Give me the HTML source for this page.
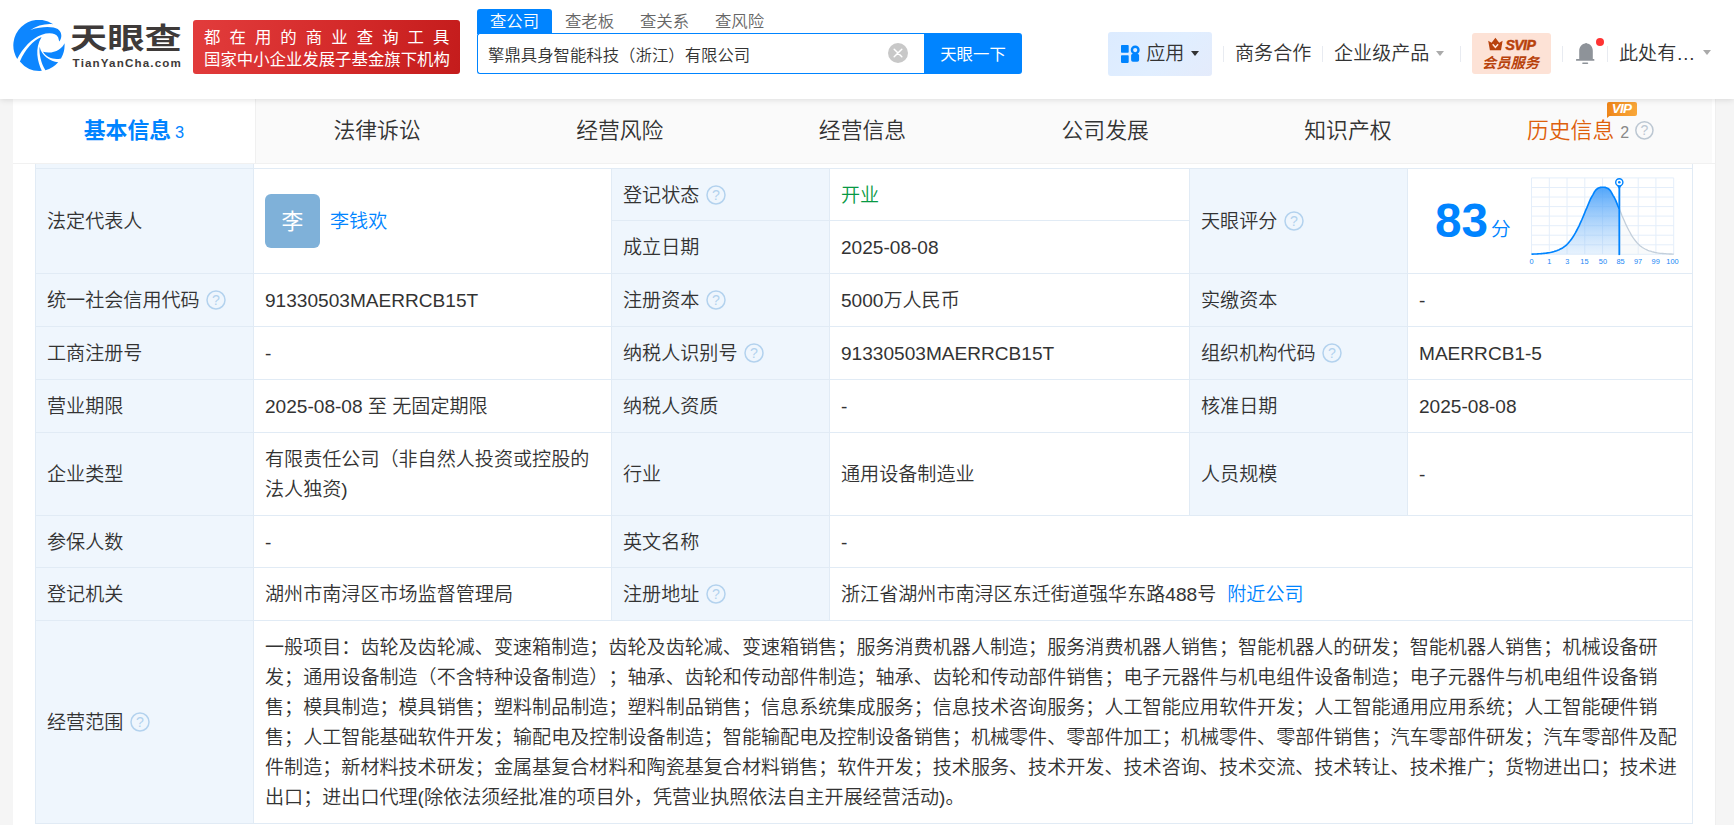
<!DOCTYPE html>
<html lang="zh-CN">
<head>
<meta charset="utf-8">
<title>天眼查</title>
<style>
*{box-sizing:border-box;margin:0;padding:0}
html,body{width:1734px;height:825px;overflow:hidden;background:#f5f5f5}
body{font-family:"Liberation Sans","Noto Sans CJK SC",sans-serif;color:#333;font-size:19.09px;position:relative;text-spacing-trim:space-all;-webkit-font-smoothing:antialiased}
a{color:#0084ff;text-decoration:none}
.abs{position:absolute}
/* header */
#hd{position:absolute;left:0;top:0;width:1734px;height:99px;background:#fff;z-index:5;box-shadow:0 1px 6px rgba(0,0,0,.12)}
#logo-ic{position:absolute;left:13px;top:20px;width:52px;height:52px}
#logo-cn{position:absolute;left:70px;top:13px;font-size:31.6px;font-weight:700;color:#3e3a39;line-height:50px;white-space:nowrap;transform:scale(1.178,0.92);transform-origin:0 39.500px}
#logo-en{position:absolute;left:72.6px;top:56px;font-size:11.6px;font-weight:700;color:#3e3a39;line-height:14px;white-space:nowrap;letter-spacing:1.16px}
#banner{position:absolute;left:193px;top:20px;width:267px;height:54px;border-radius:3px;background:linear-gradient(100deg,#e23c3c 0%,#d42a2a 55%,#c41c1c 100%);color:#fff;white-space:nowrap}
#banner .l1{position:absolute;left:11px;top:6px;font-size:16.4px;line-height:22px;letter-spacing:9.06px}
#banner .l2{position:absolute;left:11px;top:28px;font-size:16.4px;line-height:22px;letter-spacing:0px}
/* search */
#stabs{font-weight:350;position:absolute;left:477px;top:9px;height:25px;white-space:nowrap;font-size:16.4px;line-height:25px;color:#666}
#stabs span{position:absolute;top:0;height:25px;width:75px;text-align:center}
#stabs .on{background:#0084ff;color:#fff;border-radius:3px 3px 0 0}
#sbox{position:absolute;left:477px;top:33px;width:448px;height:41px;border:1.4px solid #0084ff;border-right:0;border-radius:3px 0 0 3px;background:#fff}
#sbox .t{font-weight:350;position:absolute;left:10px;top:0;line-height:42px;font-size:16.4px;color:#333;white-space:nowrap}
#sbox .x{position:absolute;left:410px;top:9px;width:20px;height:20px;border-radius:50%;background:#c8c8c8}
#sbtn{position:absolute;left:924px;top:33px;width:98px;height:41px;background:#0084ff;border-radius:0 3px 3px 0;color:#fff;font-size:16.4px;line-height:43px;text-align:center}
/* right nav */
#app{position:absolute;left:1108px;top:32px;width:104px;height:44px;border-radius:3px;background:linear-gradient(135deg,#dcebff 0%,#e0eeff 55%,#e4ebfb 100%)}
.nv{font-weight:350;position:absolute;top:39px;font-size:19.09px;line-height:30px;color:#333;white-space:nowrap}
.sep{position:absolute;top:46px;width:1px;height:15.500px;background:#e8ebf1}
.caret{position:absolute;width:0;height:0;border-left:4.5px solid transparent;border-right:4.5px solid transparent;border-top:5px solid #333}
#svip{position:absolute;left:1472px;top:33px;width:79px;height:41px;border-radius:3px;background:#fde2d6;color:#b8420c;text-align:center;white-space:nowrap}
/* tabs */
#wrap{position:absolute;left:13px;top:99px;width:1703px;height:726px;background:#fff;border-right:1px solid #efefef}
#tabs{position:absolute;left:13px;top:99px;width:1699px;height:64px;background:#fafafa;z-index:3}
#tabline{position:absolute;left:13px;top:163px;width:1702px;height:1px;background:#f1f1f1;z-index:3}
#tabs .tb{position:absolute;top:0;height:64px;width:242.710px;text-align:center;font-size:21.82px;line-height:64px;color:#333;white-space:nowrap;font-weight:350}
#tabs .tb.on{background:#fff;color:#0084ff;font-weight:700;width:242px;border-right:0}
#tabs .cnt{font-size:16.4px;font-weight:400;margin-left:4px}
/* table */
#tbl{position:absolute;left:0;top:0;width:1734px;height:825px}
.c{font-weight:350;padding-top:2px!important;position:absolute;border-right:1px solid #e1ebf5;border-bottom:1px solid #e1ebf5;background:#fff;display:flex;align-items:center;padding:0 11px;line-height:30px;white-space:nowrap}
.c.l{background:#eff6fd}
.q{display:inline-block;width:20px;height:20px;margin-left:6.5px;margin-top:-2px;flex:none}
.av{margin-top:-2px;display:block;width:55px;height:54px;border-radius:6px;background:#7fb1d9;color:#fff;font-size:21.8px;font-weight:400;line-height:55px;text-align:center;flex:none}
.nm{margin-left:10px}
.sc{position:absolute;left:27px;top:23.5px;font-size:47.7px;line-height:56px;font-weight:700;color:#0084ff}
.fen{position:absolute;left:83px;top:45px;font-size:19.6px;line-height:30px;color:#0084ff}
</style>
</head>
<body>
<div id="wrap"></div>
<div id="hd">
<svg id="logo-ic" viewBox="0 0 52 52"><g transform="translate(-5,-5) scale(0.07513)" fill="#0d86ff">
<path d="M602.7 122.3A341 341 0 0 0 122.8 585.700C196 440 318 306 450 262C540 232 640 238 668 298L682 352C722 300 722 230 662 186C605 152 455 146 298 199C385 138 500 110 602.7 122.3Z"/>
<path d="M447 294C332 338 230 458 158 618A341 341 0 0 0 450 743.600C394 620 350 452 447 294Z"/>
<path d="M421 422C410 520 440 640 498 736A341 341 0 0 0 668.2 630.100C560 612 444 542 421 422Z"/>
<path d="M751.7 374.900C722 450 600 530 465 490C520 572 620 602 705.6 578.400A341 341 0 0 0 751.7 374.900Z"/>
</g></svg>
<div id="logo-cn">天眼查</div>
<div id="logo-en">TianYanCha.com</div>
<div id="banner"><div class="l1">都在用的商业查询工具</div><div class="l2">国家中小企业发展子基金旗下机构</div></div>
<div id="stabs"><span class="on" style="left:0">查公司</span><span style="left:75px">查老板</span><span style="left:150px">查关系</span><span style="left:225px">查风险</span></div>
<div id="sbox"><div class="t">擎鼎具身智能科技（浙江）有限公司</div><div class="x"><svg viewBox="0 0 20 20" width="20" height="20"><path d="M6.200 6.200L13.800 13.800M13.800 6.200L6.200 13.800" stroke="#fff" stroke-width="1.500" stroke-linecap="round"/></svg></div></div>
<div id="sbtn">天眼一下</div>
<div id="app"></div>
<svg class="abs" style="left:1120px;top:44px" width="20" height="20" viewBox="0 0 20 20"><rect x="1" y="1.100" width="7.700" height="7.600" rx=".8" fill="#0084ff"/><rect x="1" y="11.200" width="7.700" height="7.700" rx=".8" fill="#0084ff"/><circle cx="15.200" cy="6.050" r="3.300" fill="none" stroke="#0084ff" stroke-width="2.400"/><rect x="11.100" y="9.700" width="8" height="8" rx="1.800" fill="#0084ff"/></svg>
<div class="nv" style="left:1146.200px">应用</div><div class="caret" style="left:1191px;top:51px"></div>
<div class="sep" style="left:1223px"></div>
<div class="nv" style="left:1235px">商务合作</div>
<div class="sep" style="left:1322px"></div>
<div class="nv" style="left:1334px">企业级产品</div><div class="caret" style="left:1436px;top:51px;border-top-color:#aaa"></div>
<div class="sep" style="left:1460px"></div>
<div id="svip"><div style="position:absolute;left:33.500px;top:3px;font-size:14.100px;line-height:18px;font-weight:700;font-style:italic;letter-spacing:-0.600px;-webkit-text-stroke:0.500px #b8420c">SVIP</div><div style="position:absolute;left:0;width:79px;top:21px;font-size:14.300px;line-height:18px;font-weight:700;font-style:italic;padding-right:2px">会员服务</div>
<svg class="abs" style="left:16px;top:4px" width="15" height="14" viewBox="0 0 15 14"><path d="M0.200 3.800L3.600 5.800L7.400 0.800L11.200 5.800L14.600 3.800L13 13.300H1.900Z" fill="#b8420c"/><path d="M4.700 7.300L7.400 10.300L10.100 7.300" stroke="#fde2d6" stroke-width="1.500" fill="none"/></svg></div>
<div class="sep" style="left:1562px"></div>
<svg class="abs" style="left:1574px;top:40px" width="24" height="28" viewBox="0 0 24 28"><path d="M11.200 3.400c.5-.6 1.300-.6 1.800 0c3.600.5 5.800 3.400 5.800 7.400v8.300h-13.600v-8.300c0-4 2.400-6.900 6-7.400z" fill="#8e9399"/><rect x="2" y="19.100" width="18.400" height="1.700" rx=".6" fill="#8e9399"/><rect x="8.200" y="22.400" width="6" height="1.500" rx=".7" fill="#8e9399"/></svg>
<div class="abs" style="left:1596px;top:38px;width:8.200px;height:8.200px;border-radius:50%;background:#ff3333"></div>
<div class="sep" style="left:1607px"></div>
<div class="nv" style="left:1619px">此处有…</div><div class="caret" style="left:1702.5px;top:50px;border-top-color:#aaa"></div>
</div>
<div id="tabline"></div>
<div id="tabs">
<div class="tb on" style="left:0">基本信息<span class="cnt">3</span></div>
<div class="abs" style="left:242px;top:0;width:1px;height:64px;background:#f0f0f0"></div>
<div class="tb" style="left:242.71px">法律诉讼</div>
<div class="tb" style="left:485.42px">经营风险</div>
<div class="tb" style="left:728.13px">经营信息</div>
<div class="tb" style="left:970.84px">公司发展</div>
<div class="tb" style="left:1213.55px">知识产权</div>
<div class="tb" style="left:1456.260px;color:#de5f0c;text-align:left;padding-left:57.740px">历史信息<span class="cnt" style="color:#888;margin-left:6px;font-size:16px">2</span></div>
<svg class="abs" style="left:1621px;top:20.600px" width="21" height="21" viewBox="0 0 21 21"><circle cx="10.400" cy="10.300" r="8.600" fill="none" stroke="#bcc7d2" stroke-width="1.500"/><text x="10.400" y="15.200" text-anchor="middle" font-size="14" fill="#bcc7d2" font-family="Liberation Sans,sans-serif">?</text></svg>
<div class="abs" style="left:1594px;top:2.700px;width:30px;height:14px;border-radius:2px;background:linear-gradient(100deg,#ee8418,#f9a83a);color:#fff;font-size:13.500px;line-height:14px;font-weight:700;font-style:italic;text-align:center;letter-spacing:-0.800px;padding-right:1px">VIP</div>
<svg class="abs" style="left:1594px;top:15px" width="6" height="5" viewBox="0 0 6 5"><path d="M0 0H5L0 4Z" fill="#ee8418"/></svg>
</div>
<div id="tbl">
<div class="abs" style="left:35px;top:140px;width:1px;height:684px;background:#e1ebf5"></div>
<div class="abs" style="left:35px;top:168px;width:1658px;height:1px;background:#e1ebf5"></div>
<div class="c l" style="left:36px;top:140px;width:218px;height:28px;border-bottom:0"></div>
<div class="c" style="left:254px;top:140px;width:1439px;height:28px;border-bottom:0"></div>
<div class="c l" style="left:36px;top:169px;width:218px;height:105px">法定代表人</div>
<div class="c" style="left:254px;top:169px;width:358px;height:105px"><span class="av">李</span><a class="nm">李钱欢</a></div>
<div class="c l" style="left:612px;top:169px;width:218px;height:52px">登记状态<svg class="q" viewBox="0 0 20 20"><circle cx="10" cy="10" r="9" fill="none" stroke="#b3d2ee" stroke-width="1.5"/><text x="10" y="15" text-anchor="middle" font-size="14.2" fill="#b3d2ee" font-family="Liberation Sans,sans-serif">?</text></svg></div>
<div class="c" style="left:830px;top:169px;width:360px;height:52px"><span style="color:#089944">开业</span></div>
<div class="c l" style="left:612px;top:221px;width:218px;height:53px">成立日期</div>
<div class="c" style="left:830px;top:221px;width:360px;height:53px">2025-08-08</div>
<div class="c l" style="left:1190px;top:169px;width:218px;height:105px">天眼评分<svg class="q" viewBox="0 0 20 20"><circle cx="10" cy="10" r="9" fill="none" stroke="#b3d2ee" stroke-width="1.5"/><text x="10" y="15" text-anchor="middle" font-size="14.2" fill="#b3d2ee" font-family="Liberation Sans,sans-serif">?</text></svg></div>
<div class="c" style="left:1408px;top:169px;width:285px;height:105px"><span class="sc">83</span><span class="fen">分</span><svg class="abs" style="left:117px;top:3px" width="160" height="98" viewBox="0 0 160 98">
<defs><linearGradient id="gf" x1="0" y1="0" x2="0" y2="1"><stop offset="0" stop-color="#3d9bfa" stop-opacity=".9"/><stop offset="1" stop-color="#9fcbf8" stop-opacity=".25"/></linearGradient></defs>
<path d="M6.5 5.9V82.3M24.3 5.9V82.3M42.0 5.9V82.3M59.8 5.9V82.3M77.6 5.9V82.3M95.4 5.9V82.3M113.2 5.9V82.3M130.9 5.9V82.3M148.7 5.9V82.3M6.5 5.9H148.7M6.5 15.5H148.7M6.5 25.0H148.7M6.5 34.6H148.7M6.5 44.1H148.7M6.5 53.7H148.7M6.5 63.2H148.7M6.5 72.8H148.7M6.5 82.3H148.7" stroke="#e4eefa" stroke-width="1" fill="none"/>
<path d="M94.3 36.9 L95.7 40.3 L97.0 43.7 L98.4 46.8 L99.7 49.8 L101.1 52.9 L102.5 55.7 L103.8 58.3 L105.2 60.8 L106.5 63.3 L107.9 65.4 L109.3 67.3 L110.6 69.0 L112.0 70.7 L113.3 72.1 L114.7 73.4 L116.1 74.5 L117.4 75.5 L118.8 76.3 L120.1 77.0 L121.5 77.7 L122.9 78.3 L124.2 78.8 L125.6 79.2 L126.9 79.7 L128.3 80.0 L129.7 80.3 L131.0 80.6 L132.4 80.9 L133.7 81.1 L135.1 81.3 L136.5 81.4 L137.8 81.5 L139.2 81.7 L140.5 81.7 L141.9 81.8 L143.3 81.9 L144.6 82.0 L146.0 82.0 L147.3 82.1 L148.7 82.1 L148.7 82.3 L94.3 82.3Z" fill="#e9edf1" fill-opacity=".3"/>
<path d="M6.5 82.1 L7.8 82.1 L9.0 82.0 L10.3 82.0 L11.5 82.0 L12.8 81.9 L14.0 81.8 L15.3 81.7 L16.5 81.6 L17.8 81.5 L19.0 81.4 L20.3 81.3 L21.6 81.1 L22.8 80.9 L24.1 80.7 L25.3 80.5 L26.6 80.2 L27.8 79.9 L29.1 79.5 L30.3 79.1 L31.6 78.7 L32.8 78.2 L34.1 77.7 L35.3 77.1 L36.6 76.4 L37.9 75.7 L39.1 74.8 L40.4 73.9 L41.6 72.8 L42.9 71.5 L44.1 70.1 L45.4 68.5 L46.6 66.9 L47.9 65.1 L49.1 63.1 L50.4 60.9 L51.7 58.5 L52.9 56.2 L54.2 53.6 L55.4 50.8 L56.7 48.0 L57.9 45.2 L59.2 42.2 L60.4 39.0 L61.7 36.1 L62.9 33.2 L64.2 30.1 L65.5 27.0 L66.7 24.9 L68.0 22.6 L69.2 20.3 L70.5 18.4 L71.7 17.2 L73.0 16.3 L74.2 15.7 L75.5 15.4 L76.7 15.2 L78.0 15.2 L79.2 15.2 L80.5 15.4 L81.8 15.9 L83.0 16.5 L84.3 17.5 L85.5 18.9 L86.8 21.1 L88.0 23.3 L89.3 25.5 L90.5 27.9 L91.8 31.1 L93.0 34.1 L94.3 36.9 L94.3 82.3 L6.5 82.3Z" fill="url(#gf)"/>
<path d="M94.3 36.9 L95.7 40.3 L97.0 43.7 L98.4 46.8 L99.7 49.8 L101.1 52.9 L102.5 55.7 L103.8 58.3 L105.2 60.8 L106.5 63.3 L107.9 65.4 L109.3 67.3 L110.6 69.0 L112.0 70.7 L113.3 72.1 L114.7 73.4 L116.1 74.5 L117.4 75.5 L118.8 76.3 L120.1 77.0 L121.5 77.7 L122.9 78.3 L124.2 78.8 L125.6 79.2 L126.9 79.7 L128.3 80.0 L129.7 80.3 L131.0 80.6 L132.4 80.9 L133.7 81.1 L135.1 81.3 L136.5 81.4 L137.8 81.5 L139.2 81.7 L140.5 81.7 L141.9 81.8 L143.3 81.9 L144.6 82.0 L146.0 82.0 L147.3 82.1 L148.7 82.1" stroke="#c3cfdb" stroke-width="1.3" fill="none"/>
<path d="M6.5 82.1 L7.8 82.1 L9.0 82.0 L10.3 82.0 L11.5 82.0 L12.8 81.9 L14.0 81.8 L15.3 81.7 L16.5 81.6 L17.8 81.5 L19.0 81.4 L20.3 81.3 L21.6 81.1 L22.8 80.9 L24.1 80.7 L25.3 80.5 L26.6 80.2 L27.8 79.9 L29.1 79.5 L30.3 79.1 L31.6 78.7 L32.8 78.2 L34.1 77.7 L35.3 77.1 L36.6 76.4 L37.9 75.7 L39.1 74.8 L40.4 73.9 L41.6 72.8 L42.9 71.5 L44.1 70.1 L45.4 68.5 L46.6 66.9 L47.9 65.1 L49.1 63.1 L50.4 60.9 L51.7 58.5 L52.9 56.2 L54.2 53.6 L55.4 50.8 L56.7 48.0 L57.9 45.2 L59.2 42.2 L60.4 39.0 L61.7 36.1 L62.9 33.2 L64.2 30.1 L65.5 27.0 L66.7 24.9 L68.0 22.6 L69.2 20.3 L70.5 18.4 L71.7 17.2 L73.0 16.3 L74.2 15.7 L75.5 15.4 L76.7 15.2 L78.0 15.2 L79.2 15.2 L80.5 15.4 L81.8 15.9 L83.0 16.5 L84.3 17.5 L85.5 18.9 L86.8 21.1 L88.0 23.3 L89.3 25.5 L90.5 27.9 L91.8 31.1 L93.0 34.1 L94.3 36.9" stroke="#0084ff" stroke-width="1.65" fill="none" stroke-linejoin="round"/>
<path d="M94.3 14.0V83.1" stroke="#0084ff" stroke-width="1.8"/>
<path d="M91.3 12.6L94.3 17.2L97.3 12.6Z" fill="#0084ff"/>
<circle cx="94.3" cy="10.3" r="3.6" fill="#fff" stroke="#0084ff" stroke-width="1.4"/>
<circle cx="94.3" cy="10.3" r="1.3" fill="#0084ff"/>
<g font-size="7.4" fill="#1a86f5" font-family="Liberation Sans,sans-serif"><text x="6.5" y="92.1" text-anchor="middle">0</text><text x="24.2" y="92.1" text-anchor="middle">1</text><text x="42.2" y="92.1" text-anchor="middle">3</text><text x="59.4" y="92.1" text-anchor="middle">15</text><text x="77.9" y="92.1" text-anchor="middle">50</text><text x="95.5" y="92.1" text-anchor="middle">85</text><text x="113.0" y="92.1" text-anchor="middle">97</text><text x="130.7" y="92.1" text-anchor="middle">99</text><text x="147.5" y="92.1" text-anchor="middle">100</text></g>
</svg></div>
<div class="c l" style="left:36px;top:274px;width:218px;height:53px">统一社会信用代码<svg class="q" viewBox="0 0 20 20"><circle cx="10" cy="10" r="9" fill="none" stroke="#b3d2ee" stroke-width="1.5"/><text x="10" y="15" text-anchor="middle" font-size="14.2" fill="#b3d2ee" font-family="Liberation Sans,sans-serif">?</text></svg></div>
<div class="c" style="left:254px;top:274px;width:358px;height:53px">91330503MAERRCB15T</div>
<div class="c l" style="left:612px;top:274px;width:218px;height:53px">注册资本<svg class="q" viewBox="0 0 20 20"><circle cx="10" cy="10" r="9" fill="none" stroke="#b3d2ee" stroke-width="1.5"/><text x="10" y="15" text-anchor="middle" font-size="14.2" fill="#b3d2ee" font-family="Liberation Sans,sans-serif">?</text></svg></div>
<div class="c" style="left:830px;top:274px;width:360px;height:53px">5000万人民币</div>
<div class="c l" style="left:1190px;top:274px;width:218px;height:53px">实缴资本</div>
<div class="c" style="left:1408px;top:274px;width:285px;height:53px">-</div>
<div class="c l" style="left:36px;top:327px;width:218px;height:53px">工商注册号</div>
<div class="c" style="left:254px;top:327px;width:358px;height:53px">-</div>
<div class="c l" style="left:612px;top:327px;width:218px;height:53px">纳税人识别号<svg class="q" viewBox="0 0 20 20"><circle cx="10" cy="10" r="9" fill="none" stroke="#b3d2ee" stroke-width="1.5"/><text x="10" y="15" text-anchor="middle" font-size="14.2" fill="#b3d2ee" font-family="Liberation Sans,sans-serif">?</text></svg></div>
<div class="c" style="left:830px;top:327px;width:360px;height:53px">91330503MAERRCB15T</div>
<div class="c l" style="left:1190px;top:327px;width:218px;height:53px">组织机构代码<svg class="q" viewBox="0 0 20 20"><circle cx="10" cy="10" r="9" fill="none" stroke="#b3d2ee" stroke-width="1.5"/><text x="10" y="15" text-anchor="middle" font-size="14.2" fill="#b3d2ee" font-family="Liberation Sans,sans-serif">?</text></svg></div>
<div class="c" style="left:1408px;top:327px;width:285px;height:53px">MAERRCB1-5</div>
<div class="c l" style="left:36px;top:380px;width:218px;height:53px">营业期限</div>
<div class="c" style="left:254px;top:380px;width:358px;height:53px">2025-08-08 至 无固定期限</div>
<div class="c l" style="left:612px;top:380px;width:218px;height:53px">纳税人资质</div>
<div class="c" style="left:830px;top:380px;width:360px;height:53px">-</div>
<div class="c l" style="left:1190px;top:380px;width:218px;height:53px">核准日期</div>
<div class="c" style="left:1408px;top:380px;width:285px;height:53px">2025-08-08</div>
<div class="c l" style="left:36px;top:433px;width:218px;height:83px">企业类型</div>
<div class="c" style="left:254px;top:433px;width:358px;height:83px"><span>有限责任公司（非自然人投资或控股的<br>法人独资)</span></div>
<div class="c l" style="left:612px;top:433px;width:218px;height:83px">行业</div>
<div class="c" style="left:830px;top:433px;width:360px;height:83px">通用设备制造业</div>
<div class="c l" style="left:1190px;top:433px;width:218px;height:83px">人员规模</div>
<div class="c" style="left:1408px;top:433px;width:285px;height:83px">-</div>
<div class="c l" style="left:36px;top:516px;width:218px;height:52px">参保人数</div>
<div class="c" style="left:254px;top:516px;width:358px;height:52px">-</div>
<div class="c l" style="left:612px;top:516px;width:218px;height:52px">英文名称</div>
<div class="c" style="left:830px;top:516px;width:863px;height:52px">-</div>
<div class="c l" style="left:36px;top:568px;width:218px;height:53px">登记机关</div>
<div class="c" style="left:254px;top:568px;width:358px;height:53px">湖州市南浔区市场监督管理局</div>
<div class="c l" style="left:612px;top:568px;width:218px;height:53px">注册地址<svg class="q" viewBox="0 0 20 20"><circle cx="10" cy="10" r="9" fill="none" stroke="#b3d2ee" stroke-width="1.5"/><text x="10" y="15" text-anchor="middle" font-size="14.2" fill="#b3d2ee" font-family="Liberation Sans,sans-serif">?</text></svg></div>
<div class="c" style="left:830px;top:568px;width:863px;height:53px">浙江省湖州市南浔区东迁街道强华东路488号<a style="margin-left:11px">附近公司</a></div>
<div class="c l" style="left:36px;top:621px;width:218px;height:203px">经营范围<svg class="q" viewBox="0 0 20 20"><circle cx="10" cy="10" r="9" fill="none" stroke="#b3d2ee" stroke-width="1.5"/><text x="10" y="15" text-anchor="middle" font-size="14.2" fill="#b3d2ee" font-family="Liberation Sans,sans-serif">?</text></svg></div>
<div class="c" style="left:254px;top:621px;width:1439px;height:203px"><span>一般项目：齿轮及齿轮减、变速箱制造；齿轮及齿轮减、变速箱销售；服务消费机器人制造；服务消费机器人销售；智能机器人的研发；智能机器人销售；机械设备研<br>发；通用设备制造（不含特种设备制造）；轴承、齿轮和传动部件制造；轴承、齿轮和传动部件销售；电子元器件与机电组件设备制造；电子元器件与机电组件设备销<br>售；模具制造；模具销售；塑料制品制造；塑料制品销售；信息系统集成服务；信息技术咨询服务；人工智能应用软件开发；人工智能通用应用系统；人工智能硬件销<br>售；人工智能基础软件开发；输配电及控制设备制造；智能输配电及控制设备销售；机械零件、零部件加工；机械零件、零部件销售；汽车零部件研发；汽车零部件及配<br>件制造；新材料技术研发；金属基复合材料和陶瓷基复合材料销售；软件开发；技术服务、技术开发、技术咨询、技术交流、技术转让、技术推广；货物进出口；技术进<br>出口；进出口代理(除依法须经批准的项目外，凭营业执照依法自主开展经营活动)。</span></div>
</div>
</body>
</html>
